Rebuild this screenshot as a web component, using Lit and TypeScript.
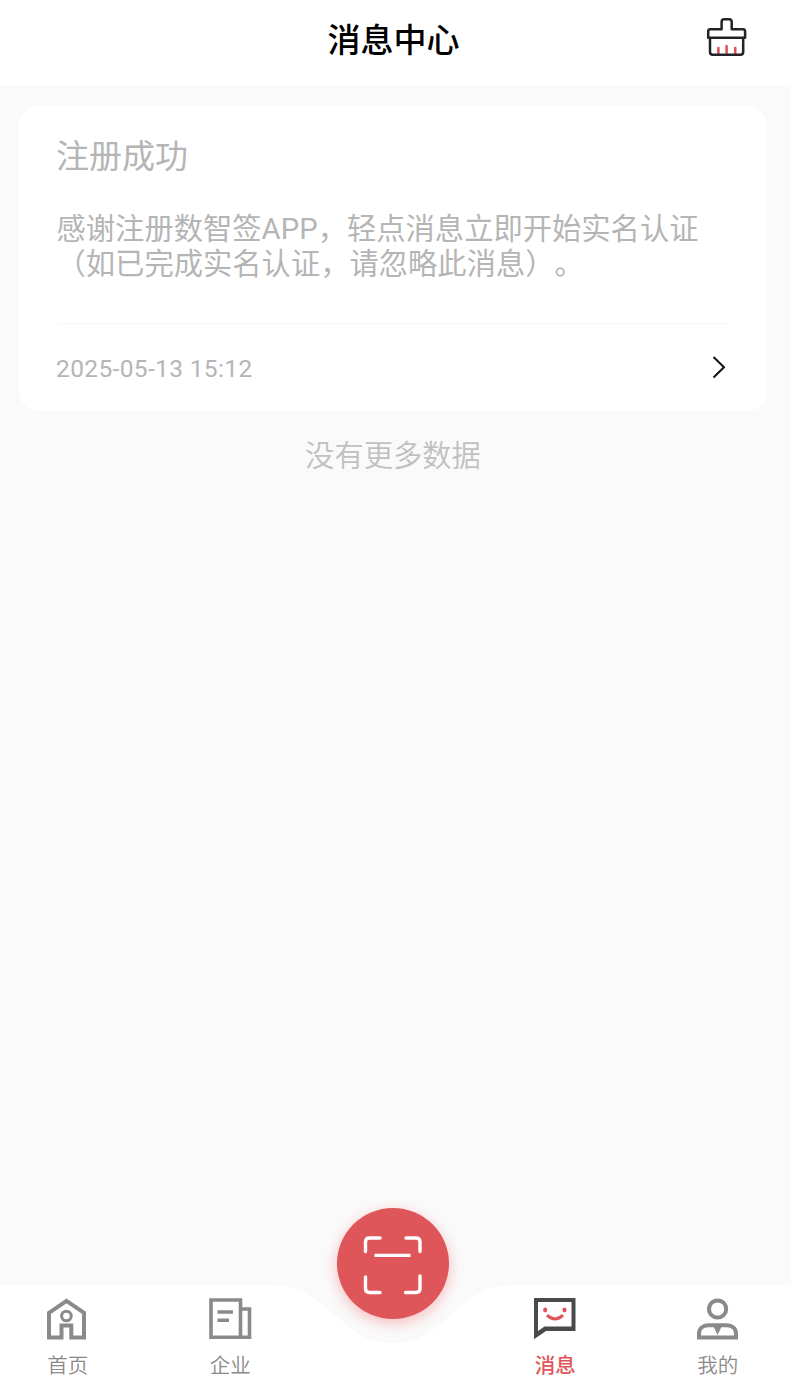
import { LitElement, html, css, svg } from "lit";
import { customElement, property } from "lit/decorators.js";

const icons: Record<string, unknown> = {
  home: svg`
    <g fill="none" stroke="#8a8a8a" stroke-width="4">
      <path d="M3 14.8 20.500 2.9 38 14.8V39.500H25.3V27.500H15.500V39.500H3Z"/>
      <circle cx="20.4" cy="18" r="4.8" stroke-width="3"/>
    </g>`,
  company: svg`
    <g fill="none" stroke="#8a8a8a" stroke-width="3.6">
      <path d="M3 2H32.500V39.200H3Z"/>
      <path d="M32.500 11H41.500V39.200H31"/>
      <path d="M9.500 14H25M9.500 22.3H21"/>
    </g>`,
  message: svg`
    <path d="M1 0H42.500V33H13L1 41.2ZM5 4V33L11.500 28.500H38.500V4Z" fill="#4a4a4c" fill-rule="evenodd"/>
    <ellipse cx="12.2" cy="12" rx="2.1" ry="2.4" fill="#de5659"/>
    <ellipse cx="31.5" cy="12" rx="2.1" ry="2.4" fill="#de5659"/>
    <path d="M14 17.200Q22 24.800 30 17.200" fill="none" stroke="#de5659" stroke-width="3"/>`,
  mine: svg`
    <g fill="none" stroke="#8a8a8a" stroke-width="4">
      <circle cx="21.6" cy="11" r="8.6"/>
      <path d="M3 39.500V36C3 30 7.300 27.3 12 27.3H31C36 27.3 40 30 40 36V39.500Z"/>
    </g>
    <path d="M16.800 27H26.300L21.600 37Z" fill="#8a8a8a"/>`,
};

@customElement("tab-item")
class TabItem extends LitElement {
  @property() icon = "";
  @property() label = "";
  @property({ type: Boolean, reflect: true }) active = false;
  static styles = css`
    :host {
      display: flex;
      flex-direction: column;
      align-items: center;
      width: 42px;
      color: #8a8a8a;
      font-size: 20.5px;
      font-weight: 350;
      line-height: 18px;
      white-space: nowrap;
    }
    :host([active]) {
      color: #de5659;
      font-weight: 500;
    }
    svg {
      display: block;
      width: 43px;
      height: 42px;
      margin-bottom: 17px;
      overflow: visible;
    }
    .label {
      padding-left: 1.5px;
    }
  `;
  render() {
    return html`<svg viewBox="0 0 43 42">${icons[this.icon]}</svg>
      <span class="label">${this.label}</span>`;
  }
}

@customElement("message-card")
class MessageCard extends LitElement {
  @property() heading = "";
  @property() body = "";
  @property() time = "";
  static styles = css`
    :host {
      display: block;
      box-sizing: border-box;
      height: 304.5px;
      padding: 31px 39px 0 37.5px;
      border-radius: 20px;
      background: #fff;
      color: #b5b5b5;
    }
    h2 {
      margin: 0 0 0 -0.5px;
      font-size: 33px;
      line-height: 40px;
      font-weight: 400;
    }
    p {
      height: 111px;
      margin: 35px -10px 0 0;
      font-size: 29.3px;
      line-height: 34.5px;
      font-weight: 400;
      text-spacing-trim: space-all;
    }
    .foot {
      display: flex;
      align-items: center;
      justify-content: space-between;
      height: 86px;
      border-top: 1px solid #f6f6f6;
      font-size: 24.5px;
      letter-spacing: 0.36px;
    }
    .time {
      padding-top: 2px;
      margin-left: -0.5px;
    }
    svg {
      width: 16px;
      height: 24px;
      margin-right: 1px;
    }
  `;
  render() {
    return html`<h2>${this.heading}</h2>
      <p>${this.body}</p>
      <div class="foot">
        <span class="time">${this.time}</span>
        <svg viewBox="0 0 16 24">
          <path d="M2.500 2 13 12.200 2.500 22.500" fill="none" stroke="#111" stroke-width="2"/>
        </svg>
      </div>`;
  }
}

@customElement("app-root")
class AppRoot extends LitElement {
  static styles = css`
    :host {
      display: flex;
      flex-direction: column;
      height: 1375px;
      overflow: hidden;
      background: #fafafa;
      font-family: Roboto, "Noto Sans CJK SC", sans-serif;
    }
    header {
      display: grid;
      grid-template-columns: 1fr auto 1fr;
      align-items: center;
      height: 85px;
      box-sizing: border-box;
      padding: 0 44px 9px 40px;
      background: #fff;
    }
    h1 {
      grid-column: 2;
      margin: 0;
      padding-top: 6px;
      font-size: 33px;
      line-height: 40px;
      font-weight: 500;
      color: #000;
    }
    .clean {
      justify-self: end;
      width: 42px;
      height: 40px;
    }
    main {
      flex: 1;
      padding: 21px 24px 0 19px;
    }
    .end {
      margin-top: 27px;
      text-align: center;
      font-size: 29.3px;
      line-height: 36px;
      font-weight: 350;
      color: #c0c0c0;
    }
    nav {
      position: relative;
      display: flex;
      justify-content: space-between;
      box-sizing: border-box;
      height: 90px;
      padding: 13px 53px 0 46px;
      background: #fff;
    }
    .gap {
      width: 42px;
    }
    .notch {
      position: absolute;
      top: 0;
      left: 273px;
      width: 240px;
      height: 58px;
    }
    .scan {
      position: absolute;
      top: -77px;
      left: 337px;
      width: 112px;
      height: 111px;
      border-radius: 50%;
      background: #de5659;
      box-shadow: 0 4px 14px rgba(240, 80, 85, 0.36);
    }
    .scan svg {
      display: block;
      width: 113px;
      height: 111px;
      margin-left: -1px;
    }
  `;
  render() {
    return html`
      <header>
        <h1>消息中心</h1>
        <svg class="clean" viewBox="0 0 42 40" fill="none" stroke-linecap="round">
          <g stroke="#e0555a" stroke-width="2.6">
            <path d="M13.4 30V35M21.6 28V35M30.2 30V35"/>
          </g>
          <g stroke="#242428" stroke-width="2.5" stroke-linejoin="round">
            <path d="M3.2 19.7V13.5Q3.2 11.3 5.4 11.3H16.6V4Q16.6 1.3 19.3 1.3H24Q26.7 1.3 26.7 4V11.3H37.900Q40.100 11.3 40.100 13.5V19.7Z"/>
            <path d="M5 20V34Q5 36.7 7.7 36.7H35.500Q38.200 36.7 38.200 34V20"/>
          </g>
        </svg>
      </header>
      <main>
        <message-card
          heading="注册成功"
          body="感谢注册数智签APP，轻点消息立即开始实名认证（如已完成实名认证，请忽略此消息）。"
          time="2025-05-13 15:12"
        ></message-card>
        <div class="end">没有更多数据</div>
      </main>
      <nav>
        <svg class="notch" viewBox="0 0 240 58">
          <path d="M0 0C26 0 43 13 57 26L72 39C86 51 99 58 120 58S154 51 168 39L183 26C197 13 214 0 240 0Z" fill="#fafafa"/>
        </svg>
        <tab-item icon="home" label="首页"></tab-item>
        <tab-item icon="company" label="企业"></tab-item>
        <span class="gap"></span>
        <tab-item icon="message" label="消息" active></tab-item>
        <tab-item icon="mine" label="我的"></tab-item>
        <div class="scan">
          <svg viewBox="0 0 113 111" fill="none" stroke="#fff" stroke-width="3.4" stroke-linecap="round">
            <path d="M29.500 43.500V34Q29.500 30 33.500 30H44M70 30H80Q84 30 84 34V43.500M29.500 69V80.500Q29.500 84.500 33.500 84.500H44M69.500 84.500H80Q84 84.500 84 80.500V68"/>
            <path d="M38.500 47.400H74.500" stroke-linecap="butt"/>
          </svg>
        </div>
      </nav>
    `;
  }
}
